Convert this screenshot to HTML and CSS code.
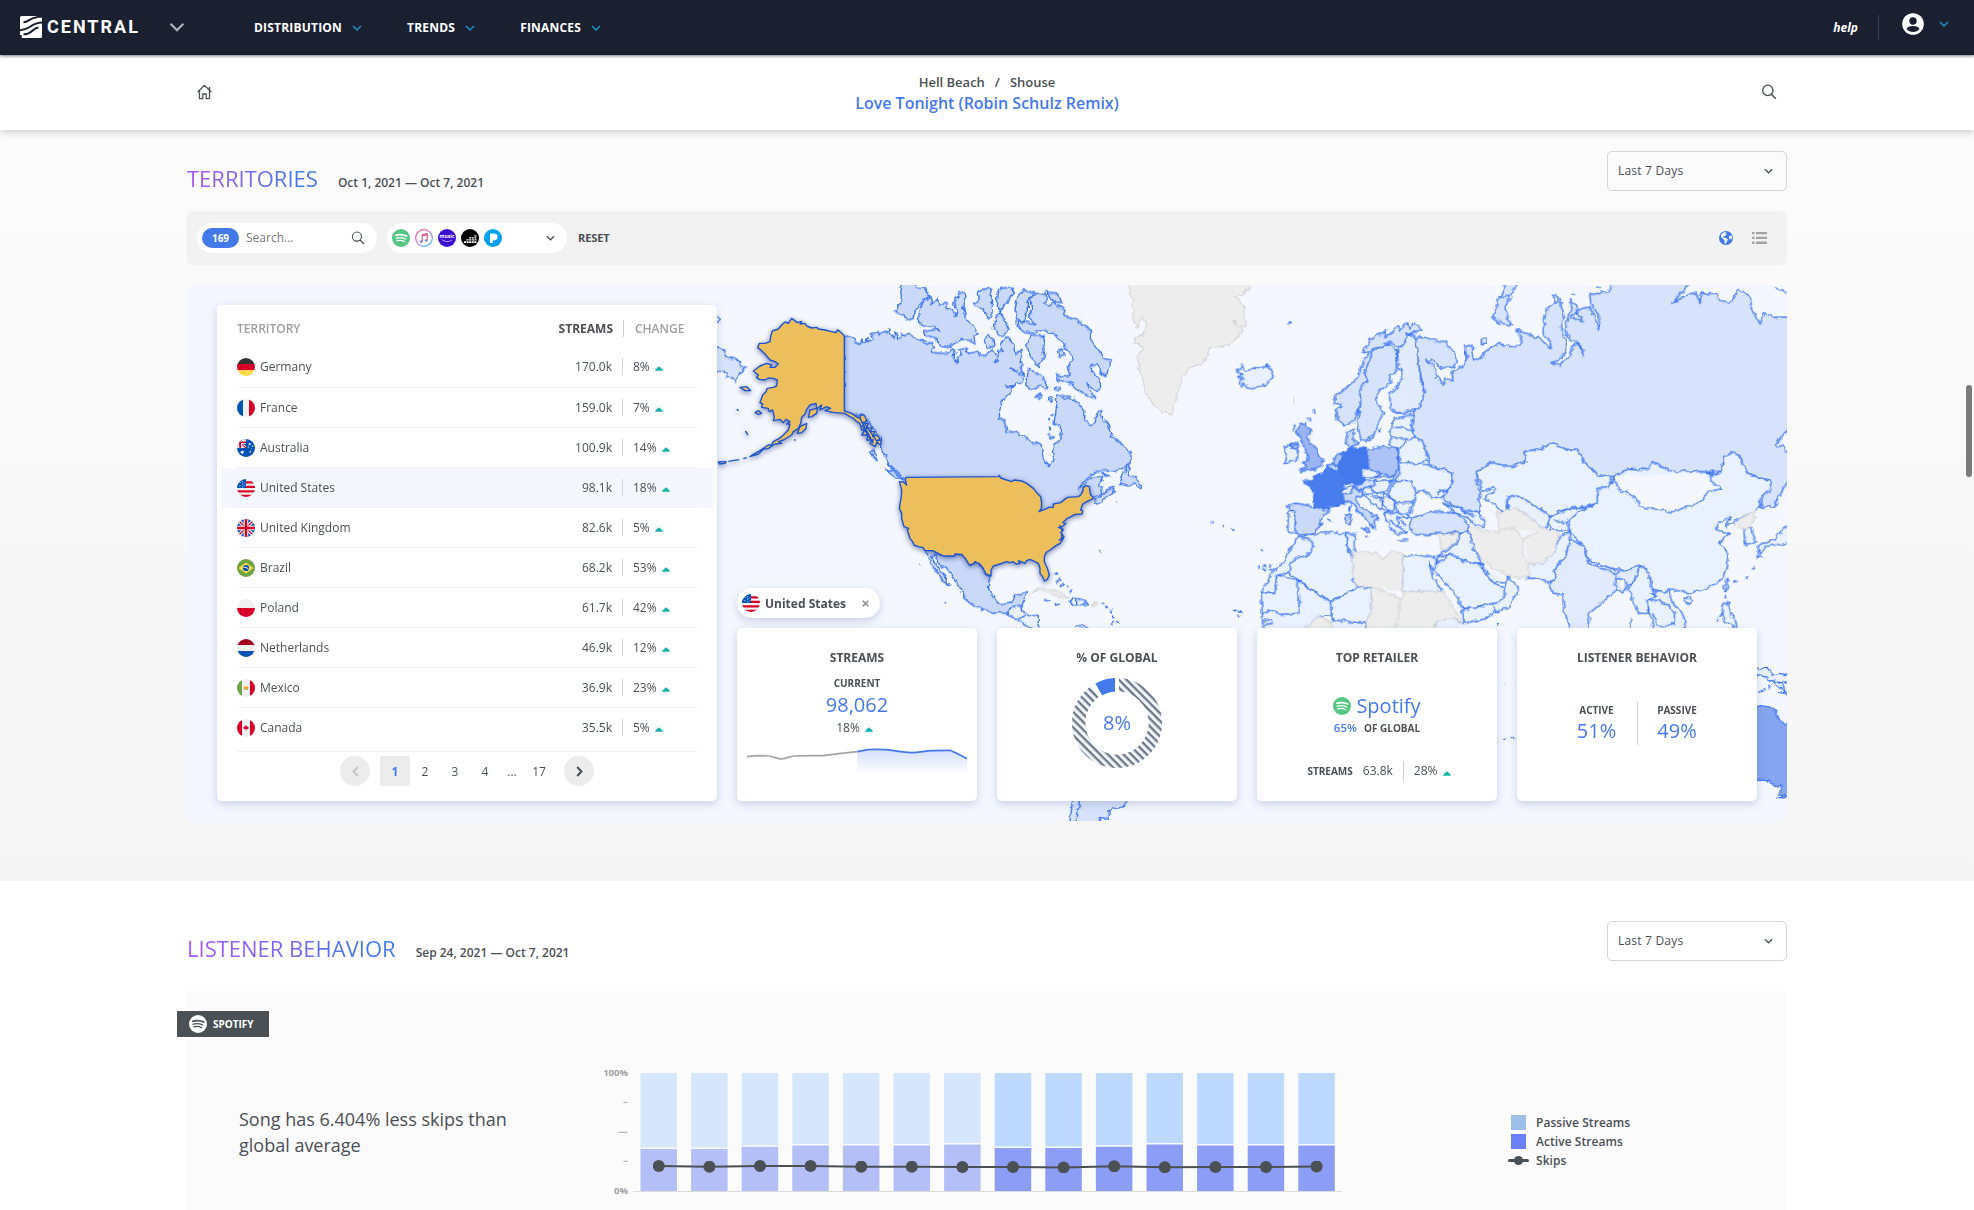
FILE: index.html
```html
<!DOCTYPE html>
<html lang="en">
<head>
<meta charset="utf-8">
<title>Central – Love Tonight</title>
<link rel="stylesheet" href="styles.css">
</head>
<body>
<svg class="defs" width="0" height="0" aria-hidden="true">
  <defs>
    <clipPath id="round"><circle cx="9" cy="9" r="9"/></clipPath>
    <symbol id="i-down" viewBox="0 0 10 6"><path d="M1 1l4 4 4-4" fill="none" stroke="currentColor" stroke-width="1.4"/></symbol>
    <symbol id="i-search" viewBox="0 0 16 16"><circle cx="6.8" cy="6.4" r="5.2" fill="none" stroke="currentColor" stroke-width="1.3"/><path d="M10.4 10.2l4.400 4.600" fill="none" stroke="currentColor" stroke-width="1.5"/></symbol>
    <symbol id="i-up" viewBox="0 0 8 5"><path d="M4 0.2L7.6 3.6Q8.2 4.8 7 4.8H1Q-.2 4.8.4 3.6Z" fill="#14b4ad"/></symbol>
    <symbol id="i-spotify" viewBox="0 0 18 18"><circle cx="9" cy="9" r="9" fill="var(--disc)"/><g fill="none" stroke="var(--wave)" stroke-linecap="round"><path d="M3.8 6.3Q9.4 4.5 14.6 7.1" stroke-width="1.7"/><path d="M4.2 9.2Q9.2 7.7 13.7 10" stroke-width="1.4"/><path d="M4.7 11.9Q9 10.7 12.8 12.7" stroke-width="1.2"/></g></symbol>
    <symbol id="f-de" viewBox="0 0 18 18"><g clip-path="url(#round)"><path fill="#333" d="M0 0h18v6H0z"/><path fill="#d80027" d="M0 6h18v6.3H0z"/><path fill="#ffda44" d="M0 12.3h18V18H0z"/></g></symbol>
    <symbol id="f-fr" viewBox="0 0 18 18"><g clip-path="url(#round)"><path fill="#f0f0f0" d="M0 0h18v18H0z"/><path fill="#0052b4" d="M0 0h6v18H0z"/><path fill="#d80027" d="M12 0h6v18h-6z"/></g></symbol>
    <symbol id="f-au" viewBox="0 0 18 18"><g clip-path="url(#round)"><path fill="#0052b4" d="M0 0h18v18H0z"/><path fill="#f0f0f0" d="M0 0h9v9H0z"/><path fill="#d80027" d="M2 2.4h7V4H4v5H2.3zM5 5l4 3.2V9H8L5 6z"/><path fill="#0052b4" d="M5.8 4.8H9V7z"/><path fill="#f0f0f0" d="M5.2 11l.6 1.2 1.3-.2-.7 1.1.8 1-1.3.1-.7 1.2-.6-1.2-1.3-.1.8-1-.6-1.1 1.2.2zM12.6 3.6l.5 1 1 .1-.8.7.2 1-.9-.5-.9.5.2-1-.8-.7 1-.1zM10.8 7.4h1.2v1.2h-1.2zM15 6.5h1.3v1.3H15zM12.6 12h1.4v1.4h-1.4zM14 9.4h.8v.8H14z"/></g></symbol>
    <symbol id="f-us" viewBox="0 0 18 18"><g clip-path="url(#round)"><path fill="#f0f0f0" d="M0 0h18v18H0z"/><path fill="#d80027" d="M8 2.2h10v2.3H8zM8 6.8h10V9H8zM0 11.2h18v2.2H0zM0 15.7h18V18H0z"/><path fill="#0052b4" d="M0 0h9v9H0z"/><path fill="#dfe8f5" d="M2.5 3h1v1h-1zM5.2 2.2h1v1h-1zM5.2 4.8h1v1h-1zM2.3 6.3h1v1h-1zM5.2 7.2h1v1h-1zM7.4 3.4h.9v.9h-.9zM7.4 6.2h.9v.9h-.9z"/></g></symbol>
    <symbol id="f-gb" viewBox="0 0 18 18"><g clip-path="url(#round)"><path fill="#0052b4" d="M0 0h18v18H0z"/><path stroke="#f0f0f0" stroke-width="3.6" d="M0 0l18 18M18 0L0 18"/><path stroke="#d80027" stroke-width="1.3" d="M0 0l18 18M18 0L0 18"/><path stroke="#f0f0f0" stroke-width="4.6" d="M9 0v18M0 9h18"/><path stroke="#d80027" stroke-width="2.4" d="M9 0v18M0 9h18"/></g></symbol>
    <symbol id="f-br" viewBox="0 0 18 18"><g clip-path="url(#round)"><path fill="#6da544" d="M0 0h18v18H0z"/><path fill="#ffda44" d="M9 3.5L16.5 9 9 14.5 1.5 9z"/><circle cx="9" cy="9" r="3.1" fill="#0052b4"/><path d="M6.2 8.2q3-.6 5.4 1.8" stroke="#f0f0f0" fill="none"/></g></symbol>
    <symbol id="f-pl" viewBox="0 0 18 18"><g clip-path="url(#round)"><path fill="#f0f0f0" d="M0 0h18v9H0z"/><path fill="#d80027" d="M0 9h18v9H0z"/></g></symbol>
    <symbol id="f-nl" viewBox="0 0 18 18"><g clip-path="url(#round)"><path fill="#a2001d" d="M0 0h18v6H0z"/><path fill="#f0f0f0" d="M0 6h18v6H0z"/><path fill="#0052b4" d="M0 12h18v6H0z"/></g></symbol>
    <symbol id="f-mx" viewBox="0 0 18 18"><g clip-path="url(#round)"><path fill="#f0f0f0" d="M0 0h18v18H0z"/><path fill="#6da544" d="M0 0h5v18H0z"/><path fill="#d80027" d="M13 0h5v18h-5z"/><path fill="#ff9811" d="M6.6 7.4h4.8L10.6 10H7.5z"/><path fill="#6da544" d="M6.6 9.1Q9 12.4 11.4 9.1L10.6 11H7.4z"/></g></symbol>
    <symbol id="f-ca" viewBox="0 0 18 18"><g clip-path="url(#round)"><path fill="#f0f0f0" d="M0 0h18v18H0z"/><path fill="#d80027" d="M0 0h5v18H0zM13 0h5v18h-5zM9 6l1 1.5 1.9.6-.8.9.4 1-2 .3L9 12l-.5-1.700-2-.3.4-1-.8-.9L8 7.5z"/></g></symbol>
  </defs>
</svg>

<header class="topbar">
  <svg class="brand" width="120" height="26" viewBox="0 0 120 26" role="img" aria-label="Central">
    <rect width="22" height="22" y="2" rx="1.5" fill="#fff"/>
    <g fill="none" stroke="#1b2030" stroke-width="2">
      <path d="M3.500 8.200C9 8 9.500 3.800 17 3.200"/>
      <path d="M-.5 16.200C10.500 16.200 9.500 9 22.500 8.600"/>
      <path d="M3.500 20.300C13 20.300 12 13.800 18.500 13.400"/>
    </g>
    <path d="M16.500 1.500h6v2.300h-6zM-.5 21h2.300v4h-2.300z" fill="#1b2030"/>
    <text x="27" y="19.200" textLength="92.500" class="brand-name">CENTRAL</text>
  </svg>
  <svg class="brand-toggle" width="16" height="10"><use href="#i-down"/></svg>
  <nav class="menu">
    <a>DISTRIBUTION <svg width="10" height="6"><use href="#i-down"/></svg></a>
    <a>TRENDS <svg width="10" height="6"><use href="#i-down"/></svg></a>
    <a>FINANCES <svg width="10" height="6"><use href="#i-down"/></svg></a>
  </nav>
  <div class="account">
    <a class="help">help</a>
    <svg class="avatar" width="22" height="22" viewBox="0 0 22 22"><circle cx="11" cy="11" r="10.8" fill="#fff"/><circle cx="11" cy="8" r="3.7" fill="#1b2030"/><path d="M4.500 16Q5.500 13 11 13t6.500 3q-2.500 3-6.500 3t-6.500-3z" fill="#1b2030"/></svg>
    <svg class="caret" width="10" height="6"><use href="#i-down"/></svg>
  </div>
</header>

<div class="trackbar">
  <svg class="tool" width="17" height="16" viewBox="0 0 17 16" fill="none" stroke="currentColor" stroke-width="1.3"><path d="M.7 8L7.500 1.300 14.300 8M2.500 6.500V14.700H5.800V10H9.200V14.700H12.500V6.500M12.500 6V3"/></svg>
  <div class="track">
    <p class="crumbs"><span>Hell Beach</span><span>/</span><span>Shouse</span></p>
    <h1>Love Tonight (Robin Schulz Remix)</h1>
  </div>
  <svg class="tool" width="16" height="16"><use href="#i-search"/></svg>
</div>

<section class="territories">
  <div class="section-head">
    <h2>TERRITORIES</h2><span class="range">Oct 1, 2021 — Oct 7, 2021</span>
    <div class="select">Last 7 Days <svg width="9" height="6"><use href="#i-down"/></svg></div>
  </div>

  <div class="filters">
    <div class="pill search"><span class="count">169</span><span class="placeholder">Search...</span><svg width="14" height="14"><use href="#i-search"/></svg></div>
    <div class="pill retailers">
      <svg class="sp" width="18" height="18"><use href="#i-spotify"/></svg>
      <svg width="18" height="18" viewBox="0 0 18 18"><defs><linearGradient id="itn" x1="0" y1="0" x2=".7" y2="1"><stop offset="0" stop-color="#f8515f"/><stop offset=".5" stop-color="#c86fd8"/><stop offset="1" stop-color="#3fb4f5"/></linearGradient></defs><circle cx="9" cy="9" r="8.3" fill="#fff" stroke="url(#itn)" stroke-width="1.2"/><path d="M7.200 5.600l5-1.100v6.700M7.200 5.600v6.600M7.200 7l5-1.100" fill="none" stroke="#d9608f" stroke-width="1.2"/><ellipse cx="6.2" cy="12.5" rx="1.5" ry="1.2" fill="#8d79e6"/><ellipse cx="11.1" cy="11.5" rx="1.5" ry="1.2" fill="#6a8bee"/></svg>
      <svg width="18" height="18" viewBox="0 0 18 18"><circle cx="9" cy="9" r="9" fill="#3a0ed0"/><text x="9" y="9.4" class="amz">music</text><path d="M3.500 10.500Q9 14.500 14 11" fill="none" stroke="#b9a8ff" stroke-width=".9"/></svg>
      <svg width="18" height="18" viewBox="0 0 18 18"><circle cx="9" cy="9" r="9"/><path fill="#fff" d="M3 12.300h2v1.600h-2zM5.600 12.300h2v1.600h-2zM5.600 10.200h2v1.400h-2zM8.200 12.300h2v1.600h-2zM8.200 10.200h2v1.400h-2zM10.800 12.300h2v1.600h-2zM10.800 10.200h2v1.400h-2zM10.800 8.200h2v1.400h-2zM13.400 12.300h2v1.600h-2zM13.400 10.200h2v1.400h-2zM13.400 8.200h2v1.400h-2zM13.400 6.200h2v1.400h-2zM8.200 8.200h2v1.400h-2z"/></svg>
      <svg width="18" height="18" viewBox="0 0 18 18"><circle cx="9" cy="9" r="9" fill="#02a0ee"/><path fill="#fff" d="M6 4.500h4q3.600.2 3.600 3.500T9.600 11.600H8.700V14H6z"/></svg>
      <svg class="more" width="9" height="6"><use href="#i-down"/></svg>
    </div>
    <a class="reset">RESET</a>
    <svg class="globe" width="14" height="14" viewBox="0 0 14 14"><circle cx="7" cy="7" r="7" fill="#4479ec"/><path fill="#f2f2f2" d="M2 3.500L5 1.200 7.600 1 6.500 2.500 8 3.300 6 5 4.500 5.200 4.300 6.500 7 7 9 8.300 8 10.500 6.600 13 5.700 12.500 5.500 9.500 3.800 7.700 2 6zM9.800 5.500L12 4.300l1 1.200.2 2-1.700 1-1.500-1z"/></svg>
    <svg class="list" width="15" height="12" viewBox="0 0 15 12"><path fill="#a3a3a3" d="M0 0h2.500v2.300H0zM0 4.800h2.500v2.300H0zM0 9.600h2.500v2.300H0zM4 0h11v2.300H4zM4 4.800h11v2.300H4zM4 9.600h11v2.300H4z"/></svg>
  </div>

  <div class="mapboard">
    <svg class="map" width="1600" height="536" viewBox="0 0 1600 536" aria-label="World map of streams">
      <defs>
        <filter id="coast" color-interpolation-filters="sRGB" filterUnits="userSpaceOnUse" x="0" y="-10" width="1600" height="556"><feTurbulence type="fractalNoise" baseFrequency=".16" numOctaves="2" seed="4"/><feDisplacementMap in="SourceGraphic" scale="6" xChannelSelector="R" yChannelSelector="G"/></filter>
        <filter id="lift" filterUnits="userSpaceOnUse" x="500" y="0" width="500" height="360"><feDropShadow dx="0" dy="1.5" stdDeviation="2.5" flood-color="#10245e" flood-opacity=".55"/></filter>
      </defs>
      <g class="lands" filter="url(#coast)">
        <!-- Greenland -->
        <path class="none" d="M941-3L946 18 946 32 950 43 956 32 959 40 956 50 949 52 948 58 956 62 951 72 951 82 956 95 960 110 966 120 975 127 985 129 988 118 990 110 995 98 996 90 1003 83 1017 78 1023 63 1042 60 1056 45 1050 38 1044 35 1050 40 1058 42 1058 23 1048 12 1062 5 1064-3z"/>
        <!-- North America -->
        <g transform="translate(523,-5) scale(.33333)">
          <path class="t3" d="M403 167L424 172 438 184 450 190 456 180 462 188 475 172 470 185 490 176 483 165 500 158 505 165 520 154 533 157 537 143 545 163 553 172 560 158 563 178 572 172 577 160 585 168 600 163 612 170 628 178 648 184 668 190 674 202 666 208 668 217 690 220 712 219 726 205 735 214 732 235 742 250 740 228 755 225 747 210 770 204 775 220 800 216 805 222 832 222 850 210 858 222 856 244 864 235 866 214 880 212 872 190 884 172 900 172 905 190 915 205 918 222 932 210 938 232 930 250 940 252 930 262 935 268 940 285 925 272 905 266 930 285 942 290 935 305 915 310 912 320 885 314 910 324 895 345 880 360 870 385 868 415 884 425 892 458 915 455 940 468 965 488 993 490 996 515 1000 535 1012 550 1018 562 1020 545 1032 540 1028 515 1030 498 1045 486 1054 470 1050 440 1032 430 1036 405 1040 378 1040 346 1065 352 1085 350 1105 370 1115 378 1125 395 1120 415 1135 425 1142 438 1155 430 1160 405 1172 390 1180 420 1190 430 1205 465 1225 485 1242 495 1262 518 1264 550 1240 565 1215 572 1180 572 1155 575 1140 590 1120 605 1105 628 1125 610 1150 590 1178 590 1172 603 1165 615 1180 625 1175 640 1160 648 1140 655 1100 670 1000 710 900 640 590 600 565 585 540 560 525 530 512 505 515 480 495 455 470 420 455 405 440 410 403 395z"/>
          <path class="t3" d="M1155 660L1170 648 1190 632 1210 622 1213 635 1195 645 1175 668 1160 672zM1228 610L1240 580 1252 555 1258 562 1252 585 1275 590 1292 605 1290 625 1275 612 1260 618 1240 612zM1175 580L1190 583 1200 590 1185 588zM482 510L492 508 502 545 490 530zM530 567L555 575 580 600 560 595 540 580zM518 515l12 15 5 25M535 555l20 12M545 560l30 25"/>
          <path class="t3" d="M567-5L575 60 557 95 582 105 590 122 610 115 612 98 640 60 660 48 645 25 620 22 612-5zM628 100L640 60 662 52 665 75 685 55 690 75 710 70 712 85 725 85 735 108 742 95 735 72 735 50 750 50 748 38 765 35 768 50 760 70 758 85 770 115 780 130 800 145 805 160 792 170 795 190 780 182 755 178 735 190 715 202 690 200 680 178 645 168 640 155 680 148 690 150 670 140 640 135 625 125zM790 70L808 60 805 40 815 28 845 25 840 45 848 65 845 110 835 115 820 85 800 80zM865 30L880 20 910 25 905 45 890 65 872 95 862 80zM855 115L870 98 885 120 895 150 880 165 862 168 850 145zM920 120L915 90 925 45 945 30 970 38 955 60 955 90 940 125zM925 125L950 128 975 130 955 110 965 90 960 60 975 40 1005 40 1010 60 1000 72 1020 75 1030 68 1050 80 1065 90 1060 105 1095 115 1120 135 1145 150 1140 175 1155 195 1170 215 1180 235 1205 240 1195 265 1190 290 1170 275 1165 255 1145 255 1140 265 1170 300 1172 325 1160 335 1130 310 1145 340 1160 355 1130 348 1100 325 1085 310 1060 305 1045 300 1040 283 1060 290 1080 290 1072 262 1090 240 1085 225 1060 190 1035 165 1015 155 990 152 975 160 940 155 925 140zM1010 35L1045 40 1055 68 1025 65zM960 165L1000 168 1005 190 998 210 1003 230 985 260 970 245 960 225 950 200zM950 320L955 262 980 280 1010 300 1008 325 985 318 965 330zM1045 210L1062 205 1066 225 1050 232zM978 350L995 338 998 345 985 355zM1016 348h10v14h-10zM1036 320h14v10h-14zM820 180L835 165 850 180 852 200 832 205zM1015 465L1030 468 1018 475z"/>
          <path class="t3" d="M645 812L668 812 700 828 733 828 735 822 755 823 785 852 800 848 818 862 828 882 843 888 838 920 845 945 865 970 895 972 910 960 915 942 950 938 942 965 935 975 918 985 905 985 905 1000 890 1000 850 998 820 988 785 972 765 955 760 930 735 905 715 870 690 855 675 825 665 830 680 855 700 885 718 918 700 905 680 875 665 855 655 830z"/>
          <path class="t1" d="M905 980L935 975 940 1000 960 1008 985 1005 985 1060 950 1035 920 1020 890 1000zM920 1020L945 1008"/>
          <path class="none" d="M970 932L990 922 1030 930 1060 940 1078 955 1050 952 1020 938 985 932zM1148 970h15v6h-15z"/>
          <path class="t1" d="M1080 970L1090 955 1115 958 1135 970 1110 978 1090 975zM1100 957V976M1035 970l18 4-15 4zM1004 960l12 4M1095 1040h40"/>
          <path class="dash" d="M1035 880L1050 900 1065 915 1085 930 1085 945M1040 900L1060 925M1173 970L1200 985 1210 1010 1208 1032M1222 1025v4M1170 815h4M1218 664h4M630 852v4M704 967h4M748 935l5 6M1030 400l-15 20M1020 440v20"/>
          <path class="t2" d="M0 190L22 200 45 215 60 235 75 235 85 240 95 260 110 262 98 275 88 285 75 305 65 290 50 290 40 270 22 275 0 270zM0 100L22 110 33 120 22 127z"/>
        </g>
        <!-- South America -->
        <g transform="translate(533,285) scale(.34437,.33333)">
          <path class="t2" d="M1025 680L1020 720 1014 765H1105L1105 743 1130 745 1130 720 1170 710 1190 680zM1045 680L1035 765"/>
          <path class="dash" d="M1490 120L1512 125 1508 138M1150 155l8 4M653 97h3"/>
        </g>
        <!-- Australia and New Guinea -->
        <g transform="translate(1053,325) scale(.35714,.33333)">
          <path class="t5" d="M1440 285L1480 290 1500 298 1498 315 1530 345 1560 345V565L1510 555 1515 525 1495 530 1485 510 1440 507zM1505 562l20 2"/>
          <path class="t1" d="M1440 175L1480 172 1490 195 1510 190 1560 200V225L1490 210 1470 200 1440 190zM1490 210L1515 215 1530 255 1508 250 1525 245zM1455 250l15-15M1482 225l5 15"/>
          <path class="dash" d="M740 216v4M740 386v4M760 378l4 6M718 43h14"/>
        </g>
        <!-- Europe, Asia, Africa -->
        <g transform="translate(993,-5) scale(.3954,.33333)">
          <path class="t2" d="M595 170L610 170 640 180 670 185 695 220 702 245 690 262 660 262 640 245 622 238 645 265 648 290 668 315 670 295 690 300 688 275 720 255 725 235 720 195 745 205 735 225 740 240 760 235 780 205 810 190 835 200 862 195 865 180 850 145 865 155 890 165 920 185 935 205 940 190 918 160 920 110 935 75 965 65 970 110 965 140 975 180 975 210 960 240 940 248 960 258 985 225 990 200 1010 190 1020 225 1005 185 985 180 975 150 980 110 990 95 985 60 1000 75 1005 100 1020 125 1000 120 990 110 1008 90 1035 80 1050 110 1058 150 1062 115 1040 75 1035 40 1085 35 1090-5 1300-5 1245 70 1280 45 1305 35 1315 70 1320 40 1355 42 1370 62 1395 65 1410 30 1440 45 1450 100 1467 132 1478 98 1500 112 1570 110 1570 430 1535 455 1505 495 1525 500 1530 515 1570 520 1570 560 1535 610 1500 680 1468 682 1490 600 1435 580 1415 525 1375 530 1370 578 1320 575 1235 572 1195 545 1185 570 1135 565 1098 590 1055 585 1030 555 1002 508 970 508 940 488 915 505 870 515 875 545 835 560 790 548 750 575 750 610 760 640 755 700 720 690 680 668 660 640 685 620 690 580 630 555 625 520 595 475 585 440 590 400 600 385 618 340 605 265 600 220z"/>
          <path class="t2" d="M822-5L850-5 850 15 835 50 822 85 838 135 815 135 790 110 800 80 805 60 822 15zM805 48L835 50M762 175h14v16h-14zM945 45L958 48 960 62 945 65zM985 45l15-5M1050 20l12 6M1535 40l-30-20"/>
          <path class="t2" d="M393 345L420 325 450 290 465 240 480 215 460 215 475 195 480 180 500 165 520 150 515 170 535 160 550 138 560 150 575 125 580 145 590 130 605 135 612 150 590 160 575 158 570 185 560 200 540 190 530 183 515 200 490 205 480 240 470 270 472 305 455 330 457 370 448 400 440 425 415 435 398 420 393 390 410 375 392 370z"/>
          <path class="t2" d="M530 190L548 210 550 268 535 285 530 310 505 330 497 350 500 380 515 395 500 430 490 465 470 485 458 480 448 430 457 370 455 320 472 305 470 270 485 215 515 200z"/>
          <path class="t15" d="M575 158L595 170 600 220 605 265 610 310 618 340 600 385 570 395 545 395 532 385 530 345 550 320 565 290 563 270 552 268 550 205 560 200 570 185z"/>
          <path class="t1" d="M145 290L160 285 143 275 155 255 165 270 190 265 210 262 220 255 232 270 235 290 220 312 190 326 165 318 150 308 160 295z"/>
          <path class="t4" d="M305 430L320 428 322 440 333 450 325 470 330 490 345 505 350 525 362 535 360 560 340 568 305 575 320 560 310 548 322 540 318 515 310 490 302 470 295 455zM280 490L300 490 298 505 285 503zM290 432l-2 20M325 412l4 14M338 385l3 15"/>
          <path class="t1" d="M262 505L280 495 285 505 298 508 297 540 265 550 270 530z"/>
          <path class="t1" d="M540 415L590 405 585 440 595 475 575 480 553 510 530 490 535 440zM540 440L590 450M530 470L575 480M545 395L560 400 600 395"/>
          <path class="t1" d="M555 545L553 510 575 475 612 480 628 540 600 550zM553 545L630 555 690 580 685 620 650 640 680 625 660 655 635 650 615 630 595 640 585 605 545 605 555 580z"/>
          <path class="t1" d="M750 575L790 548 835 560 875 545 870 515 915 505 940 488 970 508 1002 508 1030 555 1055 585 1090 590 1085 620 1055 630 1055 670 1025 680 980 685 935 710 905 680 860 655 848 645 827 652 825 700 810 690 785 665 770 650 800 630 795 622 765 635 755 600z"/>
          <path class="t1" d="M1098 590L1110 630 1150 650 1165 680 1245 695 1300 675 1340 635 1370 625 1340 605 1345 580 1370 578 1375 530 1395 518 1415 525 1435 580 1495 605 1490 630 1468 655 1465 685 1410 720 1380 740 1390 710 1355 735 1360 750 1392 760 1365 785 1385 820 1385 860 1365 905 1320 930 1290 940 1250 930 1210 935 1190 925 1185 880 1165 855 1130 870 1100 870 1035 840 1015 790 985 755 980 725 950 720 1005 700 1055 670 1055 630 1085 620zM1098 590L1135 565 1185 570 1195 545 1235 572 1320 575 1345 580"/>
          <path class="t15" d="M985 780L1015 790 1035 850 1100 880 1130 870 1165 855 1150 900 1120 935 1100 930 1090 945 1035 1000 1030 1060 990 1060 970 985 968 945 945 940 935 915 950 895 945 870 975 830zM1035 840L1100 870M1103 885L1100 930M1130 935L1125 900 1103 895"/>
          <path class="t1" d="M875 895L880 850 915 850 945 820 960 770 985 755 985 780 975 830 945 870 950 895 930 910 905 895zM935 710L985 685 1030 685 1005 700 980 725 985 750 940 750 930 725zM945 720L975 730M827 652L848 645 905 680 935 710 925 750 880 710 850 685 830 700z"/>
          <path class="none" d="M725 735L765 750 808 758 803 700 850 685 880 710 925 750 960 755 955 775 945 820 915 850 880 850 885 890 850 895 800 870 775 850 745 810 735 770zM808 750L845 745 870 775 905 755M870 775L865 815 880 850M655 762L705 760 700 790 660 812z"/>
          <path class="t2" d="M585 715L640 692 700 700 730 735 725 755 660 760 600 765 578 740z"/>
          <path class="t1" d="M665 668L720 690 755 700 770 725 765 740 745 735 725 710 700 700zM700 680L745 712"/>
          <path class="t35" d="M472 510L515 498 548 505 553 555 545 588 510 582 475 565zM388 548L395 525 412 518 405 540 400 560 388 555z"/>
          <path class="t3" d="M370 555L388 553 400 560 405 575 385 570zM418 490L422 460 440 445 440 480 455 490 430 500z"/>
          <path class="t3" d="M272 675L295 670 338 680 378 690 355 715 352 740 335 762 300 765 290 755 293 695 275 690zM412 640L440 625 462 632 460 650 445 645 450 670 480 700 505 715 492 720 490 745 478 725 455 700 430 665 415 668zM458 745h22l-2 12zM420 700L432 705 430 735 420 730zM425 678L432 680 428 695z"/>
          <path class="t1" d="M275 695L293 695 290 758 272 752zM455 572L478 565 508 582 490 592 462 590zM410 625L440 620 430 640 412 642zM495 592L540 588 540 600 500 605zM495 605L540 602 520 635 495 640 480 622zM545 605L585 605 600 640 590 668 545 668 525 640zM545 668L590 668 582 700 550 700zM515 640L545 668 540 695 525 690 510 660zM462 640L495 640 512 660 510 690 485 670zM485 650L510 655M510 690L530 695 515 705M515 700L575 700 580 715 550 712 555 730 545 735 575 755 550 765 530 740zM530 720L550 740M560 720L570 740M550 780h25M615 770L640 765"/>
          <path class="t2" d="M440 620L462 600 495 600 490 618 460 628z"/>
          <path class="t8" d="M430 500L445 505 470 502 475 540 478 565 457 575 467 600 458 614 415 610 418 590 400 575 405 540 412 518 425 515z"/>
          <path class="t7" d="M310 600L335 603 342 588 365 575 372 560 392 575 418 590 412 625 410 660 415 670 395 677 378 675 378 690 338 680 342 640 325 615 312 608z"/>
          <path class="t1" d="M300 768L335 785 335 815 280 845 275 880 245 885 240 940 205 940 235 875 260 850 275 815zM305 770L365 758 420 760 422 800 438 820 435 900 450 920 380 965 275 880 280 845 335 815 335 785zM422 760L445 765 440 800 448 815 435 830 420 800zM562 825L615 830 645 828 650 850 640 870 628 845 640 890 663 935 562 935z"/>
          <path class="t1" d="M205 940L240 940 245 885 295 900 303 1000 250 1003 225 990 208 1000zM295 900L380 965 385 1005 350 1010 305 1060 210 1060 208 1000 225 990 250 1003 303 1000zM380 965L450 920 485 925 485 990 470 1030 385 1020zM385 1020L470 1030 465 1060 380 1060zM208 1020L235 1022M208 1035L235 1030M640 1060L650 1020 690 1015 720 1035"/>
          <path class="none" d="M448 812L500 820 515 840 535 810 562 822 562 935 665 935 685 975 700 1000 720 1030 690 1015 650 1020 640 1060 470 1060 470 1030 485 990 485 920 450 918 435 890 438 820zM485 920L562 958V935M555 958L555 1000 540 1060M305 1060L350 1010 385 1030 385 1060z"/>
          <path class="t1" d="M640 870L655 830 685 820 700 835 760 855 795 910 820 925 820 960 760 980 715 985 700 950 680 920zM820 925L830 890 858 930 830 980 770 1015 720 1030 713 990 790 970 820 960zM650 855L655 825 700 790 705 760 730 755 745 810 765 855 700 835 685 820zM790 970L800 995M765 860L790 905 825 905"/>
          <path class="t1" d="M1165 855L1185 880 1190 925 1205 950 1180 960 1185 1000 1160 1000 1145 960 1135 930 1150 900zM1190 940L1240 930 1240 960 1270 1000 1280 1030 1270 1060 1200 1060 1190 1010 1180 960 1205 950zM1185 960L1230 970 1250 1000 1250 1030 1210 1040 1195 1000M1275 955L1290 950 1295 962 1282 972zM1375 925L1385 895 1388 905 1380 935zM1375 970L1390 970 1390 1000 1405 1020 1410 1060 1395 1035 1375 1025 1372 990zM1140 1020v50M1535 740L1500 780 1460 800 1460 835 1480 800 1570 780V720zM1460 810L1475 830M1425 745L1445 740 1455 785 1430 795z"/>
          <path class="none" d="M1415 720L1455 690 1450 720 1435 745 1410 745zM290 350v20"/>
          <path class="dash" d="M1450 860l-5 10M1435 885l-3 8M1400 905l15-3M80 727h5M105 738h12M130 745l6 12M205 810h6M195 860L240 858M210 868h25M135 988L155 995M145 1005l5 3M275 125l5 5M355 730l12-2M375 722l8-2M470 770h4M1380 945v20M1370 1000l-10 25M505 445l4 12"/>
        </g>
      </g>
      <!-- selected territory -->
      <g filter="url(#lift)">
        <g class="picked" transform="translate(523,-5) scale(.33333)">
          <path d="M588 592L866 590 868 586 872 594 905 605 912 600 935 603 950 610 970 625 980 638 992 650 995 670 994 685 987 695 1010 686 1016 682 1030 682 1030 672 1052 668 1072 652 1105 650 1112 645 1118 635 1120 622 1128 617 1138 620 1140 635 1142 645 1152 655 1130 665 1118 672 1112 690 1118 692 1116 702 1095 703 1072 715 1058 728 1068 730 1056 740 1045 742 1060 748 1052 758 1062 770 1048 780 1060 775 1050 790 1038 797 1020 810 1008 818 1003 830 1003 845 1012 865 1018 885 1012 898 1003 903 998 890 990 880 990 865 985 850 975 845 960 838 950 842 945 850 925 842 930 850 918 852 910 845 900 848 890 845 870 852 850 858 843 870 843 888 828 882 818 862 808 850 800 848 795 845 790 852 778 855 768 838 755 823 735 822 733 828 700 828 668 812 645 812 640 803 625 800 612 795 608 785 600 775 592 750 596 745 582 740 575 715 575 700 568 685 574 650 575 628 568 605 580 606 590 615 586 600z"/>
          <path d="M403 167L388 153 382 150 378 158 365 155 345 150 325 147 320 142 305 144 290 138 285 130 270 132 275 124 262 128 245 115 235 130 225 126 215 135 205 147 187 153 182 170 180 185 165 190 148 190 143 203 155 212 165 222 180 240 195 245 205 252 195 262 180 262 185 255 170 250 150 258 130 273 145 285 140 292 148 298 165 300 175 294 190 295 202 300 200 318 190 322 172 325 168 335 158 345 150 368 158 372 155 382 175 385 178 395 188 390 193 410 190 422 210 418 220 428 228 418 240 425 230 432 240 432 235 450 215 470 208 475 190 485 185 495 175 495 160 505 150 512 135 520 120 530 145 522 160 508 175 505 195 492 215 490 205 485 220 480 245 465 250 455 265 445 272 430 275 412 285 402 290 388 300 375 318 370 320 385 300 390 295 412 305 410 320 400 322 385 335 375 330 390 350 380 362 385 345 392 370 397 403 400 420 410 430 415 440 425 450 430 455 450 465 450 455 465 475 465 470 480 490 480 480 490 495 500 500 488 512 495 514 480 502 482 510 475 500 465 488 470 495 455 480 455 488 442 470 445 475 430 462 430 470 420 462 405 452 405 450 415 442 412 425 400 403 393z"/>
          <path d="M262 460L270 440 290 430 288 445 275 458zM90 322L110 320 122 332 105 332zM80 388l6 4M135 398L145 392 155 400 145 403zM25 546L48 545 45 550 28 552zM55 544L88 539M100 536l10-3M106 453l8 12M252 480h5M450 415l40 75M460 425l45 65M455 435l30 50M1050 735l8 20M1055 760v20"/>
        </g>
      </g>
    </svg>

    <div class="card table">
      <div class="thead"><span>TERRITORY</span><b>STREAMS</b><span class="chg">CHANGE</span></div>
      <ul>
        <li><svg><use href="#f-de"/></svg><span>Germany</span><em>170.0k</em><i>8%<svg><use href="#i-up"/></svg></i></li>
        <li><svg><use href="#f-fr"/></svg><span>France</span><em>159.0k</em><i>7%<svg><use href="#i-up"/></svg></i></li>
        <li><svg><use href="#f-au"/></svg><span>Australia</span><em>100.9k</em><i>14%<svg><use href="#i-up"/></svg></i></li>
        <li class="on"><svg><use href="#f-us"/></svg><span>United States</span><em>98.1k</em><i>18%<svg><use href="#i-up"/></svg></i></li>
        <li><svg><use href="#f-gb"/></svg><span>United Kingdom</span><em>82.6k</em><i>5%<svg><use href="#i-up"/></svg></i></li>
        <li><svg><use href="#f-br"/></svg><span>Brazil</span><em>68.2k</em><i>53%<svg><use href="#i-up"/></svg></i></li>
        <li><svg><use href="#f-pl"/></svg><span>Poland</span><em>61.7k</em><i>42%<svg><use href="#i-up"/></svg></i></li>
        <li><svg><use href="#f-nl"/></svg><span>Netherlands</span><em>46.9k</em><i>12%<svg><use href="#i-up"/></svg></i></li>
        <li><svg><use href="#f-mx"/></svg><span>Mexico</span><em>36.9k</em><i>23%<svg><use href="#i-up"/></svg></i></li>
        <li><svg><use href="#f-ca"/></svg><span>Canada</span><em>35.5k</em><i>5%<svg><use href="#i-up"/></svg></i></li>
      </ul>
      <div class="pager">
        <span class="step off"><svg width="7" height="11" viewBox="0 0 7 11"><path d="M5.800 1L1.500 5.500 5.800 10" fill="none" stroke="#c4c4c4" stroke-width="1.9"/></svg></span>
        <span class="cur">1</span><span>2</span><span>3</span><span>4</span><span class="gap">...</span><span>17</span>
        <span class="step next"><svg width="7" height="11" viewBox="0 0 7 11"><path d="M1.200 1L5.500 5.500 1.200 10" fill="none" stroke="#44494d" stroke-width="1.9"/></svg></span>
      </div>
    </div>

    <div class="detail">
      <div class="chip"><svg width="18" height="18"><use href="#f-us"/></svg><span>United States</span><svg class="x" width="7" height="7" viewBox="0 0 7 7"><path d="M.7.7l5.600 5.600M6.300.7L.7 6.300" stroke="#8d8d8d" stroke-width="1.6"/></svg></div>
      <div class="cards">
        <div class="card stat">
          <h3>STREAMS</h3>
          <h4>CURRENT</h4>
          <p class="big">98,062</p>
          <p class="delta">18%<svg><use href="#i-up"/></svg></p>
          <svg class="spark" width="220" height="30" viewBox="78 535 639 90" preserveAspectRatio="none">
            <defs><linearGradient id="sg" x1="0" y1="0" x2="0" y2="1"><stop offset="0" stop-color="#d3defa"/><stop offset="1" stop-color="#fff"/></linearGradient></defs>
            <path d="M398 549L430 543Q455 541 480 543C510 545 525 552 555 552S590 546 620 546L668 545Q680 550 717 570V617H398z" fill="url(#sg)"/>
            <path d="M78 564Q110 559 140 562C155 563 165 571 178 571S200 562 215 562Q250 560 300 561L345 555 398 549" class="old"/>
            <path d="M398 549L430 543Q455 541 480 543C510 545 525 552 555 552S590 546 620 546L668 545Q680 550 717 570" class="new"/>
          </svg>
        </div>
        <div class="card stat">
          <h3>% OF GLOBAL</h3>
          <svg class="donut" width="90" height="90" viewBox="-45 -45 90 90">
            <defs><pattern id="hatch" width="6" height="5.5" patternUnits="userSpaceOnUse" patternTransform="rotate(45)"><rect width="6" height="5.5" fill="#f3f6fd"/><rect width="6" height="2.3" fill="#6c778b"/></pattern></defs>
            <circle r="38.25" fill="none" stroke="url(#hatch)" stroke-width="13.5"/>
            <path d="M0 0L-24.500-39A46 46 0 0 1 0-46z" fill="#fff"/>
            <path d="M0 0L-21.600-39.500A45 45 0 0 1-2-45V0z" fill="#4479ec"/>
            <path d="M0 0V-46M0 0L-24.500-39" stroke="#fff" stroke-width="4"/>
            <circle r="31.5" fill="#fff"/>
            <text y="7" class="pct">8%</text>
          </svg>
        </div>
        <div class="card stat">
          <h3>TOP RETAILER</h3>
          <p class="retailer"><svg class="sp" width="18" height="18"><use href="#i-spotify"/></svg>Spotify</p>
          <p class="share"><b>65%</b>OF GLOBAL</p>
          <p class="sub"><b>STREAMS</b><span>63.8k</span><i>28%<svg><use href="#i-up"/></svg></i></p>
        </div>
        <div class="card stat">
          <h3>LISTENER BEHAVIOR</h3>
          <div class="split"><div><h4>ACTIVE</h4><p class="big">51%</p></div><div><h4>PASSIVE</h4><p class="big">49%</p></div></div>
        </div>
      </div>
    </div>
  </div>
</section>

<section class="behavior">
  <div class="section-head">
    <h2>LISTENER BEHAVIOR</h2><span class="range">Sep 24, 2021 — Oct 7, 2021</span>
    <div class="select">Last 7 Days <svg width="9" height="6"><use href="#i-down"/></svg></div>
  </div>
  <div class="panel">
    <div class="tag"><svg width="18" height="18"><use href="#i-spotify"/></svg>SPOTIFY</div>
    <div class="panel-row">
      <p class="insight">Song has 6.404% less skips than global average</p>
      <svg class="bars" width="750" height="145" viewBox="595 1063 750 145">
        <defs><marker id="dot" markerWidth="12" markerHeight="12" refX="6" refY="6" markerUnits="userSpaceOnUse"><circle cx="6" cy="6" r="6" fill="#4a5054"/></marker></defs>
        <g class="axis"><text x="628" y="1075.8">100%</text><text x="628" y="1193.8">0%</text><path d="M623.500 1102.300h4M618.500 1132.300h9M623.500 1161.300h4"/></g>
        <g fill="#d6e6fd"><path d="M640.500 1073h36.500v74.500h-36.500zM691.100 1073h36.500v74.500h-36.500zM741.700 1073h36.500v72.300h-36.500zM792.300 1073h36.500v71h-36.500zM842.900 1073h36.500v71h-36.500zM893.500 1073h36.500v71h-36.500zM944.100 1073h36.500v70h-36.500z"/></g>
        <g fill="#bdd9ff"><path d="M994.700 1073h36.500v73.500h-36.500zM1045.300 1073h36.500v73.500h-36.500zM1095.900 1073h36.500v72.300h-36.500zM1146.500 1073h36.500v70h-36.500zM1197.100 1073h36.500v71h-36.500zM1247.700 1073h36.500v71h-36.500zM1298.300 1073h36.500v71h-36.500z"/></g>
        <g fill="#b4bef7"><path d="M640.500 1149h36.500v42h-36.500zM691.100 1149h36.500v42h-36.500zM741.700 1146.800h36.500v44.200h-36.500zM792.300 1145.500h36.500v45.500h-36.500zM842.900 1145.500h36.500v45.500h-36.500zM893.500 1145.500h36.500v45.500h-36.500zM944.100 1144.500h36.500v46.500h-36.500z"/></g>
        <g fill="#8c9df5"><path d="M994.700 1148h36.500v43h-36.500zM1045.300 1148h36.500v43h-36.500zM1095.900 1146.800h36.500v44.200h-36.500zM1146.500 1144.500h36.500v46.500h-36.500zM1197.100 1145.500h36.500v45.500h-36.500zM1247.700 1145.500h36.500v45.500h-36.500zM1298.300 1145.500h36.500v45.500h-36.500z"/></g>
        <path d="M633 1191.500h709" stroke="#dcdcdc"/>
        <path class="skips" d="M658.800 1166L709.400 1166.800 760 1166 810.600 1166 861.200 1166.700 911.800 1166.800 962.400 1167 1013 1167 1063.600 1167.400 1114.200 1166.300 1164.800 1167.200 1215.400 1167 1266 1167 1316.600 1166.500"/>
      </svg>
      <ul class="legend">
        <li><svg width="21" height="15"><path d="M3 0h15v15H3z" fill="#9dbfe8"/></svg>Passive Streams</li>
        <li><svg width="21" height="15"><path d="M3 0h15v15H3z" fill="#6b80f6"/></svg>Active Streams</li>
        <li><svg width="21" height="15"><path d="M1.500 7.500h18" stroke="#4a5054" stroke-width="3" stroke-linecap="round"/><circle cx="10.5" cy="7.5" r="4.6" fill="#4a5054"/></svg>Skips</li>
      </ul>
    </div>
  </div>
</section>
<div class="scroll-thumb"></div>
</body>
</html>
```
FILE: styles.css
```css
* { box-sizing: border-box; margin: 0; padding: 0; }
html, body { height: 1210px; overflow: hidden; }
body { font: 400 12px/16px "Open Sans", sans-serif; color: #4a4f54; background: #fff; position: relative; }
ul { list-style: none; }
svg { display: block; flex: none; }
em, i { font-style: normal; }
.defs { position: absolute; }

.topbar { height: 55px; background: #1b2030; display: flex; align-items: center; padding-left: 20px; position: relative; z-index: 3; box-shadow: 0 1px 3px rgba(27, 32, 48, .6); color: #fff; }
.brand { margin-bottom: 2px; }
.brand-name { font: 700 18px Roboto, sans-serif; fill: #fff; letter-spacing: 1.6px; }
.brand-toggle { color: #aeb2bb; margin-left: 29px; margin-bottom: 2px; }
.menu { display: flex; margin-left: 69px; gap: 45px; }
.menu a { display: flex; align-items: center; gap: 10px; font-weight: 700; letter-spacing: .2px; }
.menu svg, .caret { color: #1f93d4; margin-top: 1px; }
.account { margin-left: auto; display: flex; align-items: center; padding-right: 25px; }
.help { font-weight: 700; font-style: italic; padding-right: 20px; line-height: 25px; border-right: 1px solid #3b4050; margin-right: -1px; }
.avatar { margin: 0 15px 8px 24px; }
.caret { margin-bottom: 8px; }

.trackbar { height: 75px; background: #fff; display: flex; justify-content: space-between; align-items: center; padding: 0 197px; position: relative; z-index: 2; box-shadow: 0 2px 8px rgba(0, 0, 0, .2); }
.tool { margin-bottom: 1px; }
.track { text-align: center; padding-top: 2px; margin-right: 1px; }
.crumbs { display: flex; justify-content: center; gap: 10px; font-size: 13px; font-weight: 600; line-height: 18px; }
.track h1 { font-size: 16px; font-weight: 600; line-height: 22px; color: #4479ec; margin-top: 1px; }

.territories { height: 751px; padding: 21px 187px 0; background: linear-gradient(#fbfbfb, #f5f5f5); }
.section-head { display: flex; height: 40px; }
.section-head h2 { font-size: 22px; font-weight: 400; line-height: 30px; height: 30px; margin-top: 12px; background: linear-gradient(90deg, #a855f7, #7b66f5 45%, #4479ec 85%); -webkit-background-clip: text; background-clip: text; color: transparent; }
.range { font-weight: 600; margin: 24px 0 0 20px; }
.select { margin-left: auto; width: 180px; height: 40px; border: 1px solid #d5d5d5; border-radius: 5px; display: flex; align-items: center; justify-content: space-between; padding: 0 13px 0 10px; letter-spacing: .2px; }

.filters { margin-top: 20px; height: 54px; background: #f2f2f2; border-radius: 6px; display: flex; align-items: center; padding: 0 20px 0 10px; }
.pill { height: 30px; border-radius: 15px; background: #fff; display: flex; align-items: center; }
.search { width: 180px; padding: 0 12px 0 5px; }
.count { width: 37px; height: 20px; border-radius: 10px; background: #4479ec; color: #fff; font-weight: 700; font-size: 10px; line-height: 20px; text-align: center; }
.placeholder { margin: 0 auto 0 7px; color: #777; }
.retailers { width: 180px; margin-left: 10px; padding: 0 12px 0 5px; gap: 5px; }
.sp { --disc: #55c684; --wave: #fff; }
.amz { font: 700 5px "Open Sans", sans-serif; fill: #fff; text-anchor: middle; }
.more { margin-left: auto; }
.reset { font-size: 11px; font-weight: 700; margin-left: 11px; letter-spacing: -.1px; }
.globe { margin-left: auto; margin-right: 19px; }

.mapboard { position: relative; margin-top: 20px; height: 536px; padding: 20px 30px; border-radius: 6px; background: #f4f7ff; display: flex; gap: 20px; overflow: hidden; }
.map { position: absolute; left: 0; top: 0; }
.lands path { stroke: #4077f0; stroke-width: 1.4px; vector-effect: non-scaling-stroke; stroke-linejoin: round; fill: none; }
.lands .none { fill: #ededed; stroke: #dadada; }
.lands .t1 { fill: #eaf1fe; }
.lands .t15 { fill: #e2eafe; }
.lands .t2 { fill: #d7e3fc; }
.lands .t3 { fill: #cad8fa; }
.lands .t35 { fill: #adc2f6; }
.lands .t4 { fill: #9bb4f4; }
.lands .t5 { fill: #86a5f1; }
.lands .t7 { fill: #4a7eef; }
.lands .t8 { fill: #4479ec; }
.lands .dash { stroke-width: 2px; stroke-dasharray: 3 3; }
.picked path { fill: #ecbf5b; stroke: #1f56cf; stroke-width: 1.4px; vector-effect: non-scaling-stroke; stroke-linejoin: round; }

.card { background: #fff; border-radius: 5px; box-shadow: 0 3px 8px rgba(60, 75, 130, .22); position: relative; }
.table { width: 500px; height: 496px; padding: 0 20px; }
.thead { height: 42px; display: flex; align-items: center; padding-top: 5px; font-weight: 600; color: #9e9e9e; }
.thead b { margin-left: auto; font-weight: 700; color: #4a4f54; padding-right: 10px; line-height: 17px; border-right: 1px solid #d0d0d0; }
.thead .chg { width: 62px; margin-left: 11px; }
.table li { height: 40px; display: flex; align-items: center; border-bottom: 1px solid #f0f0f0; }
.table li > svg { width: 18px; height: 18px; margin-right: 5px; }
.table em { margin-left: auto; padding-right: 10px; line-height: 17px; border-right: 1px solid #d5d5d5; }
.table li > i { width: 74px; padding-left: 10px; display: flex; align-items: center; }
i svg, .delta svg { width: 8px; height: 5px; margin: 4px 0 0 5px; }
.table li:first-child { height: 41px; padding-bottom: 1px; }
.table li:last-child { height: 44px; padding-bottom: 4px; }
.table .on { background: #f4f7fe; box-shadow: -16px 0 #f4f7fe, 16px 0 #f4f7fe; border-bottom-color: #edf0f7; }
.pager { display: flex; margin: 4px 0 0 103px; line-height: 31px; text-align: center; }
.pager span { width: 30px; height: 30px; }
.pager .step { border-radius: 50%; background: #ececec; display: flex; align-items: center; justify-content: center; }
.pager .off { margin-right: 10px; }
.pager .next { margin-left: 10px; }
.pager .cur { background: #ececec; border-radius: 3px; color: #4479ec; font-weight: 700; }
.pager .gap { width: 24px; }

.detail { position: relative; display: flex; flex-direction: column; justify-content: flex-end; align-items: flex-start; }
.chip { height: 30px; width: 143px; border-radius: 15px; background: #fff; display: flex; align-items: center; gap: 5px; padding: 0 11px 0 5px; font-weight: 700; box-shadow: 0 3px 8px rgba(60, 75, 130, .22); }
.chip span { padding-top: 1px; }
.x { margin-left: auto; margin-top: 1px; }
.cards { display: flex; gap: 20px; margin-top: 10px; }
.stat { width: 240px; height: 173px; padding-top: 22px; text-align: center; }
.stat h3 { font-size: 12px; line-height: 16px; font-weight: 700; }
.stat h4 { font-size: 10px; line-height: 14px; font-weight: 700; }
.stat h3 + h4 { margin-top: 10px; }
.big { font-size: 20px; line-height: 24px; color: #4479ec; margin-top: 3px; }
.delta { display: flex; justify-content: center; margin-top: 3px; padding-right: 5px; }
.delta svg { margin-top: 7px; margin-left: 5px; }
.spark { margin: 11px 10px 0; }
.spark path { vector-effect: non-scaling-stroke; stroke-width: 1.7px; }
.spark .old { fill: none; stroke: #a3a3a3; }
.spark .new { fill: none; stroke: #4479ec; }
.donut { margin: 12px auto 0; }
.pct { font-size: 20px; fill: #4479ec; text-anchor: middle; }
.retailer { display: flex; justify-content: center; align-items: center; gap: 5px; font-size: 20px; line-height: 28px; color: #4479ec; margin-top: 26px; }
.share { font-size: 10px; font-weight: 700; line-height: 16px; display: flex; justify-content: center; gap: 7px; align-items: baseline; }
.share b { font-size: 11.5px; font-weight: 600; color: #4479ec; }
.sub { display: flex; align-items: center; justify-content: center; line-height: 20px; margin-top: 25px; padding-left: 4px; }
.sub b { font-size: 10px; }
.sub span { margin-left: 10px; padding-right: 10px; border-right: 1px solid #d0d0d0; }
.sub i { display: flex; align-items: center; padding-left: 10px; }
.split { display: flex; justify-content: center; margin-top: 36px; margin-right: 1px; }
.split > div { width: 80px; height: 43px; padding-top: 1px; }
.split > div + div { border-left: 1px solid #d0d0d0; }
.split .big { margin-top: 2px; }

.behavior { padding: 40px 187px 0; }
.panel { margin-top: 30px; height: 240px; background: #fbfbfb; padding-top: 20px; }
.tag { width: 92px; height: 26px; margin-left: -10px; background: #4a5054; color: #fff; font-size: 10px; font-weight: 700; display: flex; align-items: center; gap: 6px; padding-left: 12px; --disc: #fff; --wave: #4a5054; }
.panel-row { display: flex; padding-left: 52px; align-items: flex-start; }
.insight { width: 290px; font-size: 18px; line-height: 26px; margin: 69px 66px 0 0; }
.bars { margin-top: 26px; }
.axis text { font: 700 9.5px "Open Sans", sans-serif; fill: #a0a0a0; text-anchor: end; }
.axis path { stroke: #b5b5b5; stroke-width: 1.3px; }
.skips { fill: none; stroke: #4a5054; stroke-width: 2px; marker: url(#dot); }
.legend { margin: 76px 0 0 163px; font-weight: 600; }
.legend li { display: flex; align-items: center; gap: 7px; height: 19px; letter-spacing: .05px; }

.scroll-thumb { position: absolute; z-index: 5; right: 2px; top: 385px; width: 6px; height: 92px; border-radius: 3px; background: #7b7b7b; }
```
